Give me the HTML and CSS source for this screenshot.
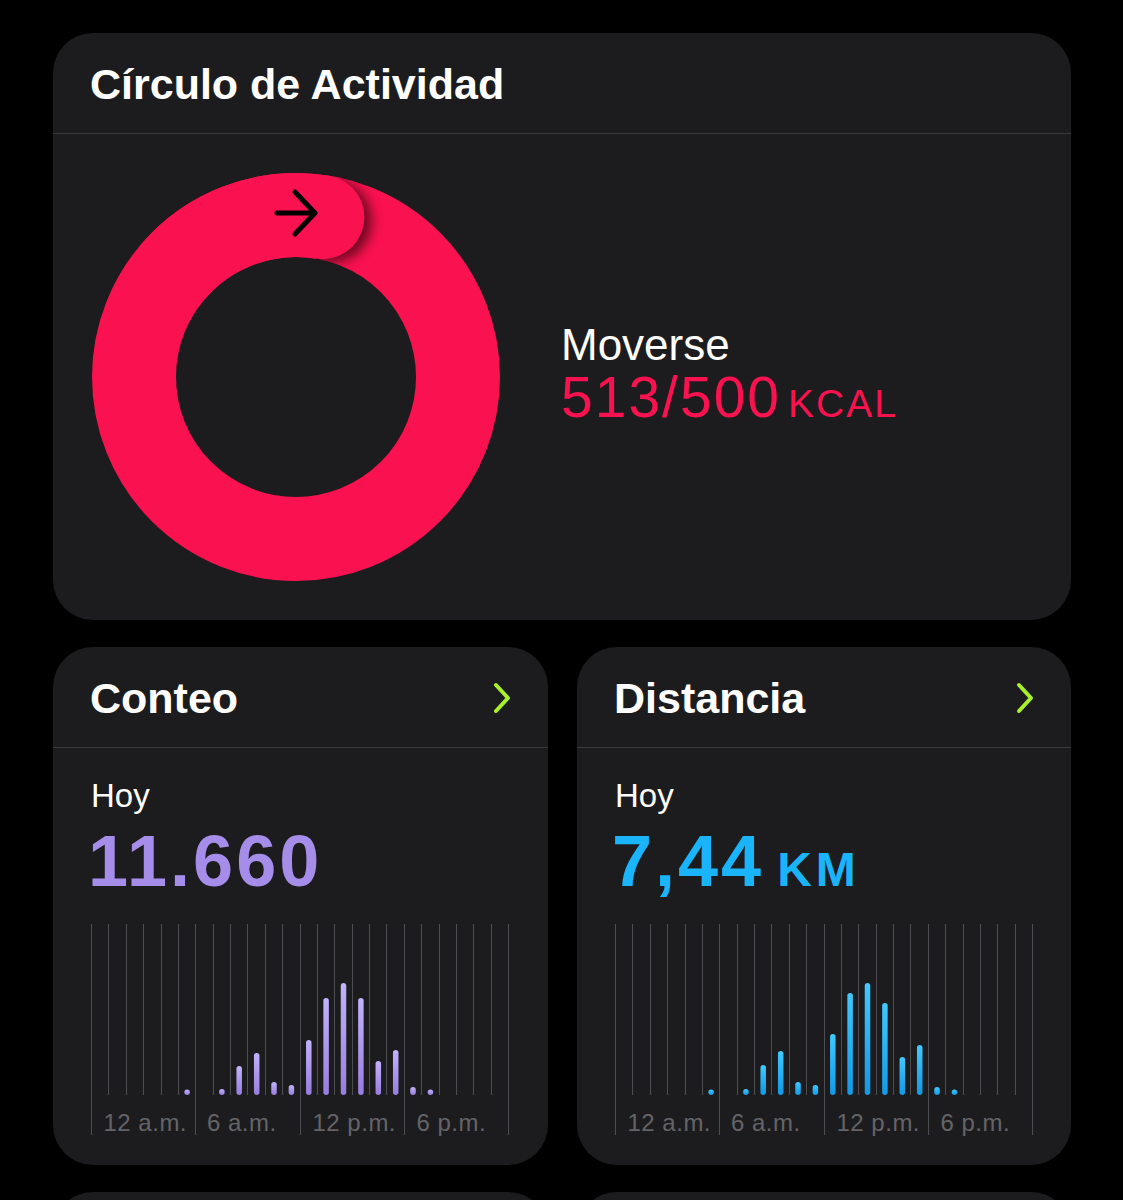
FILE: index.html
```html
<!DOCTYPE html>
<html lang="es">
<head>
<meta charset="utf-8">
<title>Actividad</title>
<link rel="stylesheet" href="styles.css">
</head>
<body>
<main class="page">
  <section class="card card-wide">
    <header class="card-head">
      <h2 class="title">Círculo de Actividad</h2>
    </header>
    <div class="activity-body">
      <svg class="ring" width="408" height="408" viewBox="0 0 408 408">
        <defs>
          <clipPath id="annulus">
            <path clip-rule="evenodd" d="M0 204 A204 204 0 1 0 408 204 A204 204 0 1 0 0 204 Z M84 204 A120 120 0 1 0 324 204 A120 120 0 1 0 84 204 Z"/>
          </clipPath>
          <filter id="blur" x="-50%" y="-50%" width="200%" height="200%">
            <feGaussianBlur stdDeviation="6"/>
          </filter>
        </defs>
        <circle class="ring-track" cx="204" cy="204" r="162"/>
        <g clip-path="url(#annulus)">
          <circle class="ring-shadow" cx="238" cy="48" r="42" filter="url(#blur)"/>
        </g>
        <path class="ring-track" d="M79.9 99.9 A162 162 0 0 1 230.5 44.2"/>
        <circle class="ring-cap" cx="230.5" cy="44.2" r="42"/>
        <path class="ring-arrow" d="M185 40 H222 M203 19 L223 40 L203 61"/>
      </svg>
      <div class="move">
        <div class="move-label">Moverse</div>
        <div class="move-value">513/500<span class="move-unit">KCAL</span></div>
      </div>
    </div>
  </section>

  <section class="card">
    <header class="card-head">
      <h2 class="title">Conteo</h2>
      <svg class="chevron" width="20" height="32" viewBox="0 0 20 32"><path d="M4 3 L16 16 L4 29"/></svg>
    </header>
    <div class="stat-body">
      <div class="hoy">Hoy</div>
      <div class="big big-steps">11.660</div>
      <svg class="chart" width="420" height="212" viewBox="0 0 420 212">
        <defs>
          <linearGradient id="gPurple" x1="0" y1="0" x2="0" y2="1">
            <stop offset="0" stop-color="#c4b2fb"/>
            <stop offset="1" stop-color="#977ddf"/>
          </linearGradient>
        </defs>
        <g class="grid">
          <line class="major" x1="0.5" y1="0" x2="0.5" y2="211"/>
          <line x1="17.5" y1="0" x2="17.5" y2="171"/>
          <line x1="35.5" y1="0" x2="35.5" y2="171"/>
          <line x1="52.5" y1="0" x2="52.5" y2="171"/>
          <line x1="70.5" y1="0" x2="70.5" y2="171"/>
          <line x1="87.5" y1="0" x2="87.5" y2="171"/>
          <line class="major" x1="104.5" y1="0" x2="104.5" y2="211"/>
          <line x1="122.5" y1="0" x2="122.5" y2="171"/>
          <line x1="139.5" y1="0" x2="139.5" y2="171"/>
          <line x1="156.5" y1="0" x2="156.5" y2="171"/>
          <line x1="174.5" y1="0" x2="174.5" y2="171"/>
          <line x1="191.5" y1="0" x2="191.5" y2="171"/>
          <line class="major" x1="209.5" y1="0" x2="209.5" y2="211"/>
          <line x1="226.5" y1="0" x2="226.5" y2="171"/>
          <line x1="243.5" y1="0" x2="243.5" y2="171"/>
          <line x1="261.5" y1="0" x2="261.5" y2="171"/>
          <line x1="278.5" y1="0" x2="278.5" y2="171"/>
          <line x1="295.5" y1="0" x2="295.5" y2="171"/>
          <line class="major" x1="313.5" y1="0" x2="313.5" y2="211"/>
          <line x1="330.5" y1="0" x2="330.5" y2="171"/>
          <line x1="348.5" y1="0" x2="348.5" y2="171"/>
          <line x1="365.5" y1="0" x2="365.5" y2="171"/>
          <line x1="382.5" y1="0" x2="382.5" y2="171"/>
          <line x1="400.5" y1="0" x2="400.5" y2="171"/>
          <line class="major" x1="417.5" y1="0" x2="417.5" y2="211"/>
        </g>
        <g class="bars" fill="url(#gPurple)">
          <rect x="93.35" y="165.5" width="5.5" height="5.5" rx="2.75"/>
          <rect x="128.15" y="165" width="5.5" height="6" rx="2.75"/>
          <rect x="145.45" y="142" width="5.5" height="29" rx="2.75"/>
          <rect x="162.95" y="129" width="5.5" height="42" rx="2.75"/>
          <rect x="180.25" y="158" width="5.5" height="13" rx="2.75"/>
          <rect x="197.65" y="161" width="5.5" height="10" rx="2.75"/>
          <rect x="215.05" y="116" width="5.5" height="55" rx="2.75"/>
          <rect x="232.35" y="74" width="5.5" height="97" rx="2.75"/>
          <rect x="249.75" y="59" width="5.5" height="112" rx="2.75"/>
          <rect x="267.15" y="74" width="5.5" height="97" rx="2.75"/>
          <rect x="284.55" y="137" width="5.5" height="34" rx="2.75"/>
          <rect x="301.95" y="126" width="5.5" height="45" rx="2.75"/>
          <rect x="319.25" y="163" width="5.5" height="8" rx="2.75"/>
          <rect x="336.65" y="165.5" width="5.5" height="5.5" rx="2.75"/>
        </g>
        <g class="axis">
          <text x="12.5" y="207">12 a.m.</text>
          <text x="116" y="207">6 a.m.</text>
          <text x="221.5" y="207">12 p.m.</text>
          <text x="325.5" y="207">6 p.m.</text>
        </g>
      </svg>
    </div>
  </section>

  <section class="card">
    <header class="card-head">
      <h2 class="title">Distancia</h2>
      <svg class="chevron" width="20" height="32" viewBox="0 0 20 32"><path d="M4 3 L16 16 L4 29"/></svg>
    </header>
    <div class="stat-body">
      <div class="hoy">Hoy</div>
      <div class="big big-dist">7,44<span class="big-unit">KM</span></div>
      <svg class="chart" width="420" height="212" viewBox="0 0 420 212">
        <defs>
          <linearGradient id="gBlue" x1="0" y1="0" x2="0" y2="1">
            <stop offset="0" stop-color="#40caff"/>
            <stop offset="1" stop-color="#1199e6"/>
          </linearGradient>
        </defs>
        <g class="grid">
          <line class="major" x1="0.5" y1="0" x2="0.5" y2="211"/>
          <line x1="17.5" y1="0" x2="17.5" y2="171"/>
          <line x1="35.5" y1="0" x2="35.5" y2="171"/>
          <line x1="52.5" y1="0" x2="52.5" y2="171"/>
          <line x1="70.5" y1="0" x2="70.5" y2="171"/>
          <line x1="87.5" y1="0" x2="87.5" y2="171"/>
          <line class="major" x1="104.5" y1="0" x2="104.5" y2="211"/>
          <line x1="122.5" y1="0" x2="122.5" y2="171"/>
          <line x1="139.5" y1="0" x2="139.5" y2="171"/>
          <line x1="156.5" y1="0" x2="156.5" y2="171"/>
          <line x1="174.5" y1="0" x2="174.5" y2="171"/>
          <line x1="191.5" y1="0" x2="191.5" y2="171"/>
          <line class="major" x1="209.5" y1="0" x2="209.5" y2="211"/>
          <line x1="226.5" y1="0" x2="226.5" y2="171"/>
          <line x1="243.5" y1="0" x2="243.5" y2="171"/>
          <line x1="261.5" y1="0" x2="261.5" y2="171"/>
          <line x1="278.5" y1="0" x2="278.5" y2="171"/>
          <line x1="295.5" y1="0" x2="295.5" y2="171"/>
          <line class="major" x1="313.5" y1="0" x2="313.5" y2="211"/>
          <line x1="330.5" y1="0" x2="330.5" y2="171"/>
          <line x1="348.5" y1="0" x2="348.5" y2="171"/>
          <line x1="365.5" y1="0" x2="365.5" y2="171"/>
          <line x1="382.5" y1="0" x2="382.5" y2="171"/>
          <line x1="400.5" y1="0" x2="400.5" y2="171"/>
          <line class="major" x1="417.5" y1="0" x2="417.5" y2="211"/>
        </g>
        <g class="bars" fill="url(#gBlue)">
          <rect x="93.35" y="165.5" width="5.5" height="5.5" rx="2.75"/>
          <rect x="128.15" y="165" width="5.5" height="6" rx="2.75"/>
          <rect x="145.45" y="141" width="5.5" height="30" rx="2.75"/>
          <rect x="162.95" y="127" width="5.5" height="44" rx="2.75"/>
          <rect x="180.25" y="158" width="5.5" height="13" rx="2.75"/>
          <rect x="197.65" y="161" width="5.5" height="10" rx="2.75"/>
          <rect x="215.05" y="110" width="5.5" height="61" rx="2.75"/>
          <rect x="232.35" y="69" width="5.5" height="102" rx="2.75"/>
          <rect x="249.75" y="59" width="5.5" height="112" rx="2.75"/>
          <rect x="267.15" y="79" width="5.5" height="92" rx="2.75"/>
          <rect x="284.55" y="133" width="5.5" height="38" rx="2.75"/>
          <rect x="301.95" y="121" width="5.5" height="50" rx="2.75"/>
          <rect x="319.25" y="163" width="5.5" height="8" rx="2.75"/>
          <rect x="336.65" y="165.5" width="5.5" height="5.5" rx="2.75"/>
        </g>
        <g class="axis">
          <text x="12.5" y="207">12 a.m.</text>
          <text x="116" y="207">6 a.m.</text>
          <text x="221.5" y="207">12 p.m.</text>
          <text x="325.5" y="207">6 p.m.</text>
        </g>
      </svg>
    </div>
  </section>

  <section class="card card-stub"></section>
  <section class="card card-stub"></section>
</main>
</body>
</html>
```

FILE: styles.css
```css
* {
  box-sizing: border-box;
  margin: 0;
  padding: 0;
}

html,
body {
  background: #000;
}

body {
  width: 1123px;
  height: 1200px;
  overflow: hidden;
  font-family: "Liberation Sans", Arial, sans-serif;
  color: #fff;
}

.page {
  display: grid;
  grid-template-columns: 495px 494px;
  column-gap: 29px;
  row-gap: 27px;
  padding: 33px 0 0 53px;
}

.card {
  background: #1c1c1e;
  border-radius: 40px;
  overflow: hidden;
}

.card-wide {
  grid-column: 1 / span 2;
}

.card-stub {
  height: 518px;
}

.card-head {
  height: 101px;
  padding: 30px 36px 0 37px;
  border-bottom: 1px solid #38383a;
  display: flex;
  justify-content: space-between;
  align-items: flex-start;
}

.title {
  font-size: 43px;
  line-height: 43px;
  font-weight: 700;
  letter-spacing: 0;
}

.chevron {
  margin-top: 5px;
}

.chevron path {
  fill: none;
  stroke: #a8f02a;
  stroke-width: 4;
  stroke-linecap: round;
  stroke-linejoin: round;
}

/* Activity ring card */
.activity-body {
  display: flex;
  align-items: center;
  padding: 39px;
}

.ring {
  flex: none;
  display: block;
}

.ring-track {
  fill: none;
  stroke: #fa114f;
  stroke-width: 84;
}

.ring-cap {
  fill: #fa114f;
}

.ring-shadow {
  fill: #000;
  opacity: 0.55;
}

.ring-arrow {
  fill: none;
  stroke: #000;
  stroke-width: 5;
  stroke-linecap: round;
  stroke-linejoin: round;
}

.move {
  margin-left: 61px;
  padding-bottom: 6px;
}

.move-label {
  font-size: 44px;
  line-height: 44px;
}

.move-value {
  margin-top: 2px;
  font-size: 57px;
  line-height: 57px;
  color: #fa114f;
  letter-spacing: 2px;
}

.move-unit {
  margin-left: 7px;
  font-size: 39px;
  line-height: 1;
  letter-spacing: 2px;
}

/* Stat cards */
.stat-body {
  padding: 31px 38px 29px 38px;
}

.hoy {
  font-size: 33px;
  line-height: 33px;
}

.big {
  margin-top: 13px;
  height: 72px;
  font-size: 72px;
  line-height: 72px;
  font-weight: 700;
  white-space: nowrap;
}

.big-steps {
  margin-left: -3px;
  color: #a58de9;
  letter-spacing: 3px;
}

.big-dist {
  margin-left: -3px;
  color: #19b4f9;
  letter-spacing: 3px;
}

.big-unit {
  margin-left: 13px;
  font-size: 48px;
  line-height: 1;
  letter-spacing: 4px;
}

.chart {
  display: block;
  margin-top: 27px;
}

.grid line {
  stroke: #4e4e52;
  stroke-width: 1;
}

.axis text {
  font-family: "Liberation Sans", Arial, sans-serif;
  font-size: 24px;
  fill: #646468;
  letter-spacing: 0.5px;
}
```
